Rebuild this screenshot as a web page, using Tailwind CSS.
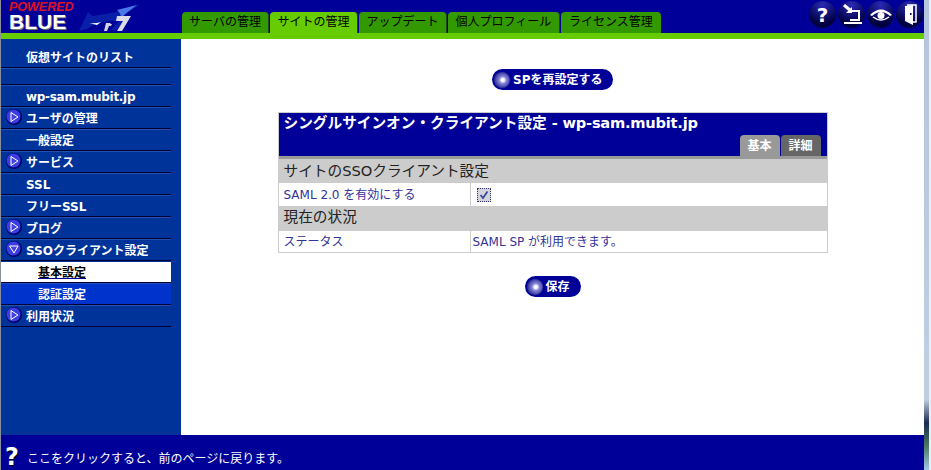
<!DOCTYPE html>
<html lang="ja">
<head>
<meta charset="UTF-8">
<title>Powered BLUE</title>
<script src="https://cdn.jsdelivr.net/npm/@tailwindcss/browser@4"></script>
</head>
<body class="bg-white overflow-hidden font-['DejaVu_Sans','Noto_Sans_CJK_JP',sans-serif]">
<div class="flex h-[470px] w-[931px]">
  <div class="w-px bg-[#8a8f9c]"></div>
  <div class="flex flex-col w-[923px]">

    <!-- header -->
    <header class="flex h-[33px] bg-[#000099]">
      <div class="w-[180px] flex">
        <div class="pl-[8px] pt-[1px] flex flex-col">
          <span class="h-[12px] text-[12.5px] leading-[12px] italic font-bold text-[#e01020] font-['Liberation_Sans']">POWERED</span>
          <span class="h-[18px] text-[21px] leading-[18px] font-bold text-white font-['Liberation_Sans'] [text-shadow:1px_1px_0_#777]">BLUE</span>
        </div>
        <svg class="ml-[5px] mt-[3px]" width="64" height="30" viewBox="0 0 64 30">
          <path d="M0 28 L9 9 L12 12 L14 13 Q40 10 62 1 Q50 8 44 14 L50 14 L38 27 L32 27 L40 18 L30 18 Q16 20 8 26 Z" fill="#0a1fa8"/>
          <path d="M38 7 Q50 4 58 2 Q48 9 42 15 Q42 10 38 7 Z" fill="#4a78e8"/>
          <path d="M10 20 Q16 21 22 19 L18 22 Z" fill="#ffffff"/>
          <path d="M27 20 h5 l-1 1 h2 l-1 2 h-2 l-2 5 h-3 Z" fill="#d0d0e0"/>
          <path d="M38 13 h14 l-9 15 h-5 l6 -10 h-7 Z" fill="#dcdce8"/>
        </svg>
      </div>
      <nav class="flex items-end gap-px pl-px text-[12px] leading-[21px] text-black">
        <span class="h-[21px] w-[87px] text-center rounded-t-[4px] bg-[#339900] border-r border-[#224433]">サーバの管理</span>
        <span class="h-[21px] w-[88px] text-center rounded-t-[4px] bg-[#66cc00] border-r border-[#224433]">サイトの管理</span>
        <span class="h-[21px] w-[88px] text-center rounded-t-[4px] bg-[#339900] border-r border-[#224433]">アップデート</span>
        <span class="h-[21px] w-[112px] text-center rounded-t-[4px] bg-[#339900] border-r border-[#224433]">個人プロフィール</span>
        <span class="h-[21px] w-[100px] text-center rounded-t-[4px] bg-[#339900]">ライセンス管理</span>
      </nav>
      <div class="ml-auto flex gap-[2px] pt-px pr-px">
        <span class="w-[27px] h-[27px] rounded-full bg-[radial-gradient(circle_at_50%_15%,#2a2ab8,#000040_70%)] flex items-center justify-center text-white font-bold text-[20px] leading-none">?</span>
        <span class="w-[27px] h-[27px] rounded-full bg-[radial-gradient(circle_at_50%_15%,#2a2ab8,#000040_70%)] flex items-center justify-center">
          <svg width="22" height="22" viewBox="0 0 22 22" fill="none"><path d="M3 1 L10 7" stroke="#fff" stroke-width="3"/><path d="M11 3 V9 H5 Z" fill="#fff"/><path d="M9 7 H18 V16 H9" stroke="#fff" stroke-width="2"/><path d="M3 18 H21 V20 H3 Z" fill="#fff"/></svg>
        </span>
        <span class="w-[27px] h-[27px] rounded-full bg-[radial-gradient(circle_at_50%_15%,#2a2ab8,#000040_70%)] flex items-center justify-center">
          <svg width="22" height="14" viewBox="0 0 22 14" fill="none"><path d="M0 7 Q11 -4 22 7 L20 8 Q11 0 2 8 Z" fill="#fff"/><path d="M3 9 Q11 15 19 9" stroke="#fff" stroke-width="1.5"/><circle cx="11" cy="7.5" r="3.5" fill="#fff"/></svg>
        </span>
        <span class="w-[27px] h-[27px] rounded-full bg-[radial-gradient(circle_at_50%_15%,#2a2ab8,#000040_70%)] flex items-center justify-center">
          <svg width="14" height="22" viewBox="0 0 14 22" fill="none"><path d="M4 1 H13 V18 H10" stroke="#fff" stroke-width="1.5"/><path d="M2 2 L10 1 V21 L2 17 Z" fill="#fff"/><rect x="7" y="9" width="1.5" height="2" fill="#000066"/></svg>
        </span>
      </div>
    </header>
    <div class="h-[6px] bg-[#66cc00]"></div>

    <div class="flex flex-1 min-h-0">
      <!-- sidebar -->
      <aside class="w-[180px] bg-[#003399] text-white text-[12px] font-bold">
        <div class="w-[170px] flex flex-col">
          <div class="h-[29px] pl-[25px] pt-[11px] leading-[17px] border-b border-[#000033]">仮想サイトのリスト</div>
          <div class="h-[17px] border-t border-t-[#1f50b0] border-b border-[#000033]"></div>
          <div class="h-[22px] pl-[25px] leading-[22px] border-t border-t-[#1f50b0] border-b border-[#000033] tracking-[-0.3px]">wp-sam.mubit.jp</div>
          <div class="h-[22px] flex items-center gap-[4px] pl-[5px] pt-px border-t border-t-[#1f50b0] border-b border-[#000033]">
            <svg width="16" height="16" viewBox="0 0 16 16" class="-mt-[4px] shrink-0"><circle cx="8" cy="8" r="8" fill="#000066"/><circle cx="7.5" cy="7.5" r="7" fill="#3c3ce4"/><path d="M5 3.5 L12 8 L5 12.5 Z" fill="#4444dd" stroke="#fff" stroke-width="1"/></svg>
            <span>ユーザの管理</span>
          </div>
          <div class="h-[22px] pl-[25px] leading-[22px] border-t border-t-[#1f50b0] border-b border-[#000033]">一般設定</div>
          <div class="h-[22px] flex items-center gap-[4px] pl-[5px] pt-px border-t border-t-[#1f50b0] border-b border-[#000033]">
            <svg width="16" height="16" viewBox="0 0 16 16" class="-mt-[4px] shrink-0"><circle cx="8" cy="8" r="8" fill="#000066"/><circle cx="7.5" cy="7.5" r="7" fill="#3c3ce4"/><path d="M5 3.5 L12 8 L5 12.5 Z" fill="#4444dd" stroke="#fff" stroke-width="1"/></svg>
            <span>サービス</span>
          </div>
          <div class="h-[22px] pl-[25px] leading-[22px] border-t border-t-[#1f50b0] border-b border-[#000033]">SSL</div>
          <div class="h-[22px] pl-[25px] leading-[22px] border-t border-t-[#1f50b0] border-b border-[#000033]">フリーSSL</div>
          <div class="h-[22px] flex items-center gap-[4px] pl-[5px] pt-px border-t border-t-[#1f50b0] border-b border-[#000033]">
            <svg width="16" height="16" viewBox="0 0 16 16" class="-mt-[4px] shrink-0"><circle cx="8" cy="8" r="8" fill="#000066"/><circle cx="7.5" cy="7.5" r="7" fill="#3c3ce4"/><path d="M5 3.5 L12 8 L5 12.5 Z" fill="#4444dd" stroke="#fff" stroke-width="1"/></svg>
            <span>ブログ</span>
          </div>
          <div class="h-[22px] flex items-center gap-[4px] pl-[5px] pt-px border-t border-t-[#1f50b0] border-b border-[#000033]">
            <svg width="16" height="16" viewBox="0 0 16 16" class="-mt-[4px] shrink-0"><circle cx="8" cy="8" r="8" fill="#000066"/><circle cx="7.5" cy="7.5" r="7" fill="#3c3ce4"/><path d="M3.5 5 L12 5 L8 12 Z" fill="#4444dd" stroke="#fff" stroke-width="1"/></svg>
            <span>SSOクライアント設定</span>
          </div>
          <div class="h-[22px] pt-px border-b border-[#000033]">
            <div class="h-[20px] pl-[37px] leading-[22px] bg-white text-black"><span class="underline decoration-[#000099]">基本設定</span></div>
          </div>
          <div class="h-[22px] pl-[37px] leading-[22px] bg-[#0033cc] border-t border-t-[#1f50b0] border-b border-[#000033]">認証設定</div>
          <div class="h-[22px] flex items-center gap-[4px] pl-[5px] pt-px border-t border-t-[#1f50b0] border-b border-[#000033]">
            <svg width="16" height="16" viewBox="0 0 16 16" class="-mt-[4px] shrink-0"><circle cx="8" cy="8" r="8" fill="#000066"/><circle cx="7.5" cy="7.5" r="7" fill="#3c3ce4"/><path d="M5 3.5 L12 8 L5 12.5 Z" fill="#4444dd" stroke="#fff" stroke-width="1"/></svg>
            <span>利用状況</span>
          </div>
        </div>
      </aside>

      <!-- main -->
      <main class="flex-1 flex flex-col items-center pt-[30px]">
        <button class="h-[21px] w-[121px] rounded-full bg-[#000099] flex items-center gap-[3px] pl-[2px] text-white text-[12px] font-bold">
          <span class="w-[16px] h-[16px] rounded-full bg-[radial-gradient(circle_at_55%_50%,#ffffff_12%,#8888dd_30%,#222288_75%)]"></span>
          <span>SPを再設定する</span>
        </button>

        <table class="mt-[22px] w-[550px] border border-[#cccccc] border-collapse text-[12px] text-[#333399]">
          <thead>
            <tr class="bg-[#000099]">
              <th colspan="2" class="h-[43px] p-0 align-top text-left">
                <div class="flex flex-col h-[43px]">
                  <div class="pl-[5px] h-[20px] leading-[20px] text-white text-[14.67px] font-bold">シングルサインオン・クライアント設定 <span class="tracking-[-0.25px]">- wp-sam.mubit.jp</span></div>
                  <div class="flex justify-end gap-px pr-[6px] mt-auto text-white text-[12px] font-bold">
                    <span class="w-[40px] h-[21px] leading-[22px] text-center rounded-t-[4px] bg-[#999999]">基本</span>
                    <span class="w-[40px] h-[21px] leading-[22px] text-center rounded-t-[4px] bg-[#666666]">詳細</span>
                  </div>
                </div>
              </th>
            </tr>
          </thead>
          <tbody>
            <tr><td colspan="2" class="h-[3px] p-0 bg-[#999999]"></td></tr>
            <tr class="bg-[#cccccc] text-[#222222] text-[14.67px]"><td colspan="2" class="h-[24px] p-0 pl-[5px]">サイトのSSOクライアント設定</td></tr>
            <tr>
              <td class="h-[23px] w-[192px] p-0 pl-[5px] pt-px border-r border-[#cccccc]">SAML 2.0 を有効にする</td>
              <td class="p-0 pl-[6px]">
                <span class="flex items-center justify-center w-[14px] h-[14px] bg-[#d4d4dc] border border-dotted border-[#333366]">
                  <svg width="10" height="10" viewBox="0 0 10 10" fill="none"><path d="M1.5 5 L4 8 L8.5 1.5" stroke="#3a4aa0" stroke-width="1.8"/></svg>
                </span>
              </td>
            </tr>
            <tr class="bg-[#cccccc] text-[#222222] text-[14.67px]"><td colspan="2" class="h-[24px] p-0 pl-[5px] pb-[2px]">現在の状況</td></tr>
            <tr class="border-t border-[#cccccc]">
              <td class="h-[22px] p-0 pl-[5px] pt-px border-r border-[#cccccc]">ステータス</td>
              <td class="p-0 pl-[2px] pt-px">SAML SP が利用できます。</td>
            </tr>
          </tbody>
        </table>

        <button class="mt-[23px] h-[21px] w-[56px] rounded-full bg-[#000099] flex items-center gap-[3px] pl-[2px] text-white text-[12px] font-bold">
          <span class="w-[16px] h-[16px] rounded-full bg-[radial-gradient(circle_at_55%_50%,#ffffff_12%,#8888dd_30%,#222288_75%)]"></span>
          <span>保存</span>
        </button>
      </main>
    </div>

    <footer class="h-[35px] bg-[#000099] flex items-end pb-[3px] pl-[4px] gap-[7px] text-white text-[12px]">
      <span class="w-[15px] h-[19px] text-[24px] leading-[19px] font-bold [text-shadow:1px_1px_0_#000]">?</span>
      <span class="leading-[18px] -mb-px">ここをクリックすると、前のページに戻ります。</span>
    </footer>
  </div>
  <div class="w-[5px] bg-[linear-gradient(to_bottom,#b4c6dc_0%,#c0cfe0_85%,#1a2a50_90%,#4a7a60_95%,#a0c8ec_100%)]"></div>
  <div class="w-[2px] bg-[#e8eef6]"></div>
</div>
</body>
</html>
